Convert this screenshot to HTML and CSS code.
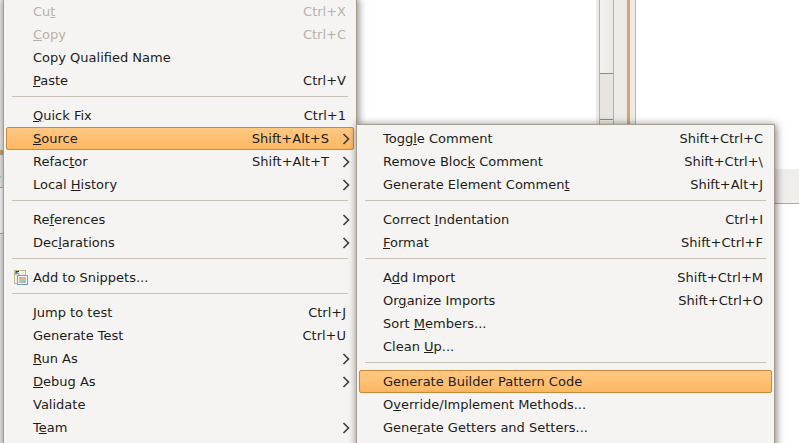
FILE: index.html
```html
<!DOCTYPE html>
<html>

<head>
    <meta charset="UTF-8">
    <title>Source menu</title>
    <link rel="stylesheet" href="styles.css">
</head>

<body>
    <div class="desk">
        <div class="strip">
            <div class="strip_t">t</div>
            <div class="strip_tan"></div>
            <div class="strip_s">s</div>
            <div class="strip_white"></div>
        </div>
        <div class="pane"></div>
        <div class="scroll">
            <div class="track">
                <div class="thumb"></div>
                <div class="trough"></div>
                <div class="btn"></div>
            </div>
            <div class="sash"></div>
        </div>
        <div class="right">
            <div class="band"></div>
        </div>
    </div>

    <div class="menu main_menu">
        <div class="row off"><span class="label">Cu<u>t</u></span><span class="key">Ctrl+X</span></div>
        <div class="row off"><span class="label"><u>C</u>opy</span><span class="key">Ctrl+C</span></div>
        <div class="row"><span class="label">Copy Qualified Name</span></div>
        <div class="row"><span class="label"><u>P</u>aste</span><span class="key">Ctrl+V</span></div>
        <div class="sep"></div>
        <div class="row"><span class="label"><u>Q</u>uick Fix</span><span class="key">Ctrl+1</span></div>
        <div class="row sel"><span class="label"><u>S</u>ource</span><span class="key">Shift+Alt+S</span><svg class="arrow" viewBox="0 0 8 12"><path d="M1.5 1 L6.5 6 L1.5 11" /></svg></div>
        <div class="row"><span class="label">Refac<u>t</u>or</span><span class="key">Shift+Alt+T</span><svg class="arrow" viewBox="0 0 8 12"><path d="M1.5 1 L6.5 6 L1.5 11" /></svg></div>
        <div class="row"><span class="label">Local <u>H</u>istory</span><svg class="arrow" viewBox="0 0 8 12"><path d="M1.5 1 L6.5 6 L1.5 11" /></svg></div>
        <div class="sep"></div>
        <div class="row"><span class="label">Re<u>f</u>erences</span><svg class="arrow" viewBox="0 0 8 12"><path d="M1.5 1 L6.5 6 L1.5 11" /></svg></div>
        <div class="row"><span class="label">Dec<u>l</u>arations</span><svg class="arrow" viewBox="0 0 8 12"><path d="M1.5 1 L6.5 6 L1.5 11" /></svg></div>
        <div class="sep"></div>
        <div class="row">
            <svg class="icon" viewBox="0 0 14 15">
                <rect x="0.5" y="0.5" width="11" height="13" fill="#f4f0e4" stroke="#c4b98c" />
                <rect x="3.5" y="5.5" width="10" height="9" fill="#fdfdfd" stroke="#7f9db9" />
                <path d="M5 8h7" stroke="#d9534f" />
                <path d="M5 10h7" stroke="#4c9f50" />
                <path d="M5 12h7" stroke="#4a7fc1" />
                <path d="M2 1.5l3 3M2 1.5v3M2 1.5h3" fill="none" stroke="#1d3f73" />
            </svg>
            <span class="label">Add to Snippets...</span>
        </div>
        <div class="sep"></div>
        <div class="row"><span class="label">Jump to test</span><span class="key">Ctrl+J</span></div>
        <div class="row"><span class="label">Generate Test</span><span class="key">Ctrl+U</span></div>
        <div class="row"><span class="label"><u>R</u>un As</span><svg class="arrow" viewBox="0 0 8 12"><path d="M1.5 1 L6.5 6 L1.5 11" /></svg></div>
        <div class="row"><span class="label"><u>D</u>ebug As</span><svg class="arrow" viewBox="0 0 8 12"><path d="M1.5 1 L6.5 6 L1.5 11" /></svg></div>
        <div class="row"><span class="label">Validate</span></div>
        <div class="row"><span class="label">T<u>e</u>am</span><svg class="arrow" viewBox="0 0 8 12"><path d="M1.5 1 L6.5 6 L1.5 11" /></svg></div>
    </div>

    <div class="menu sub_menu">
        <div class="row"><span class="label">Togg<u>l</u>e Comment</span><span class="key">Shift+Ctrl+C</span></div>
        <div class="row"><span class="label">Remove Bloc<u>k</u> Comment</span><span class="key">Shift+Ctrl+\</span></div>
        <div class="row"><span class="label">Generate Element Commen<u>t</u></span><span class="key">Shift+Alt+J</span></div>
        <div class="sep"></div>
        <div class="row"><span class="label">Correct <u>I</u>ndentation</span><span class="key">Ctrl+I</span></div>
        <div class="row"><span class="label"><u>F</u>ormat</span><span class="key">Shift+Ctrl+F</span></div>
        <div class="sep"></div>
        <div class="row"><span class="label">A<u>d</u>d Import</span><span class="key">Shift+Ctrl+M</span></div>
        <div class="row"><span class="label">Or<u>g</u>anize Imports</span><span class="key">Shift+Ctrl+O</span></div>
        <div class="row"><span class="label">Sort <u>M</u>embers...</span></div>
        <div class="row"><span class="label">Clean <u>U</u>p...</span></div>
        <div class="sep"></div>
        <div class="row sel"><span class="label">Generate Builder Pattern Code</span></div>
        <div class="row"><span class="label">O<u>v</u>erride/Implement Methods...</span></div>
        <div class="row"><span class="label">Gene<u>r</u>ate Getters and Setters...</span></div>
    </div>
</body>

</html>
```

FILE: styles.css
```css
* {
    padding: 0;
    margin: 0;
    box-sizing: border-box;
}

html,
body {
    height: 100%;
    overflow: hidden;
}

body {
    position: relative;
    background: #ffffff;
    font-family: "DejaVu Sans", sans-serif;
    font-size: 13px;
    color: #1c1c1c;
}

/* window behind the menus */
.desk {
    display: flex;
    height: 443px;
}

.strip {
    display: flex;
    flex-direction: column;
    width: 4px;
    background: #f0eeec;
    overflow: hidden;
}

.strip_t {
    height: 23px;
    margin-top: 65px;
    margin-left: -5px;
    line-height: 23px;
    color: #2f5f10;
}

.strip_tan {
    height: 5px;
    margin-top: 62px;
    background: #c9a878;
    border-bottom: 1px solid #b0a89c;
}

.strip_s {
    height: 33px;
    margin-left: -6px;
    line-height: 40px;
    border-bottom: 1px solid #b0a89c;
    background: #f0eeec;
}

.strip_white {
    height: 46px;
    background: #ffffff;
    border-bottom: 1px solid #b0a89c;
}

.pane {
    width: 592px;
    background: #ffffff;
}

.scroll {
    display: flex;
    width: 40px;
    padding-left: 3px;
    background: #eeebe7;
    border-right: 1px solid #bdb6ac;
}

.track {
    display: flex;
    flex-direction: column;
    width: 15px;
    height: 124px;
    border-left: 1px solid #b8b0a6;
    border-right: 1px solid #b8b0a6;
}

.thumb {
    height: 74px;
    background: linear-gradient(to right, #f4f2f0, #ebe8e4);
    border-bottom: 1px solid #8f887e;
}

.trough {
    height: 45px;
    background: #e8e4e0;
}

.btn {
    height: 5px;
    background: #f0eeeb;
    border-top: 1px solid #8f887e;
}

.sash {
    width: 3px;
    height: 124px;
    margin-left: 13px;
    background: #d4a56c;
}

.right {
    flex: 1;
    padding-top: 169px;
    background: #ffffff;
}

.band {
    height: 35px;
    background: #f0eeeb;
    border-bottom: 1px solid #b0a89c;
}

/* menus */
.menu {
    position: absolute;
    padding: 2px;
    background: #f6f4f2;
    border: 1px solid #a89c8c;
    box-shadow: 1px 1px 8px rgba(0, 0, 0, 0.55);
}

.main_menu {
    top: -3px;
    bottom: -12px;
    left: 3px;
    width: 354px;
}

.sub_menu {
    top: 124px;
    bottom: -12px;
    left: 356px;
    width: 419px;
}

.row {
    display: flex;
    align-items: center;
    height: 23px;
    padding-left: 27px;
    padding-right: 8px;
    white-space: nowrap;
}

.sub_menu .row {
    padding-left: 24px;
    padding-right: 9px;
}

.label {
    flex: 1;
}

.arrow {
    width: 8px;
    height: 12px;
    margin-right: -4px;
    fill: none;
    stroke: #3c3c3c;
    stroke-width: 1.6;
}

.key + .arrow {
    margin-left: 13px;
}

.icon {
    width: 14px;
    height: 15px;
    margin-left: -19px;
    margin-right: 5px;
}

.off {
    color: #b9b1a9;
}

.sel {
    border: 1px solid #c98a3c;
    border-radius: 2px;
    background: linear-gradient(to bottom, #ffc883, #fdb862);
    padding-left: 26px;
    padding-right: 7px;
}

.sub_menu .sel {
    padding-left: 23px;
}

.sep {
    height: 1px;
    margin: 4px 6px 7px;
    background: #c9c1b6;
}
```
